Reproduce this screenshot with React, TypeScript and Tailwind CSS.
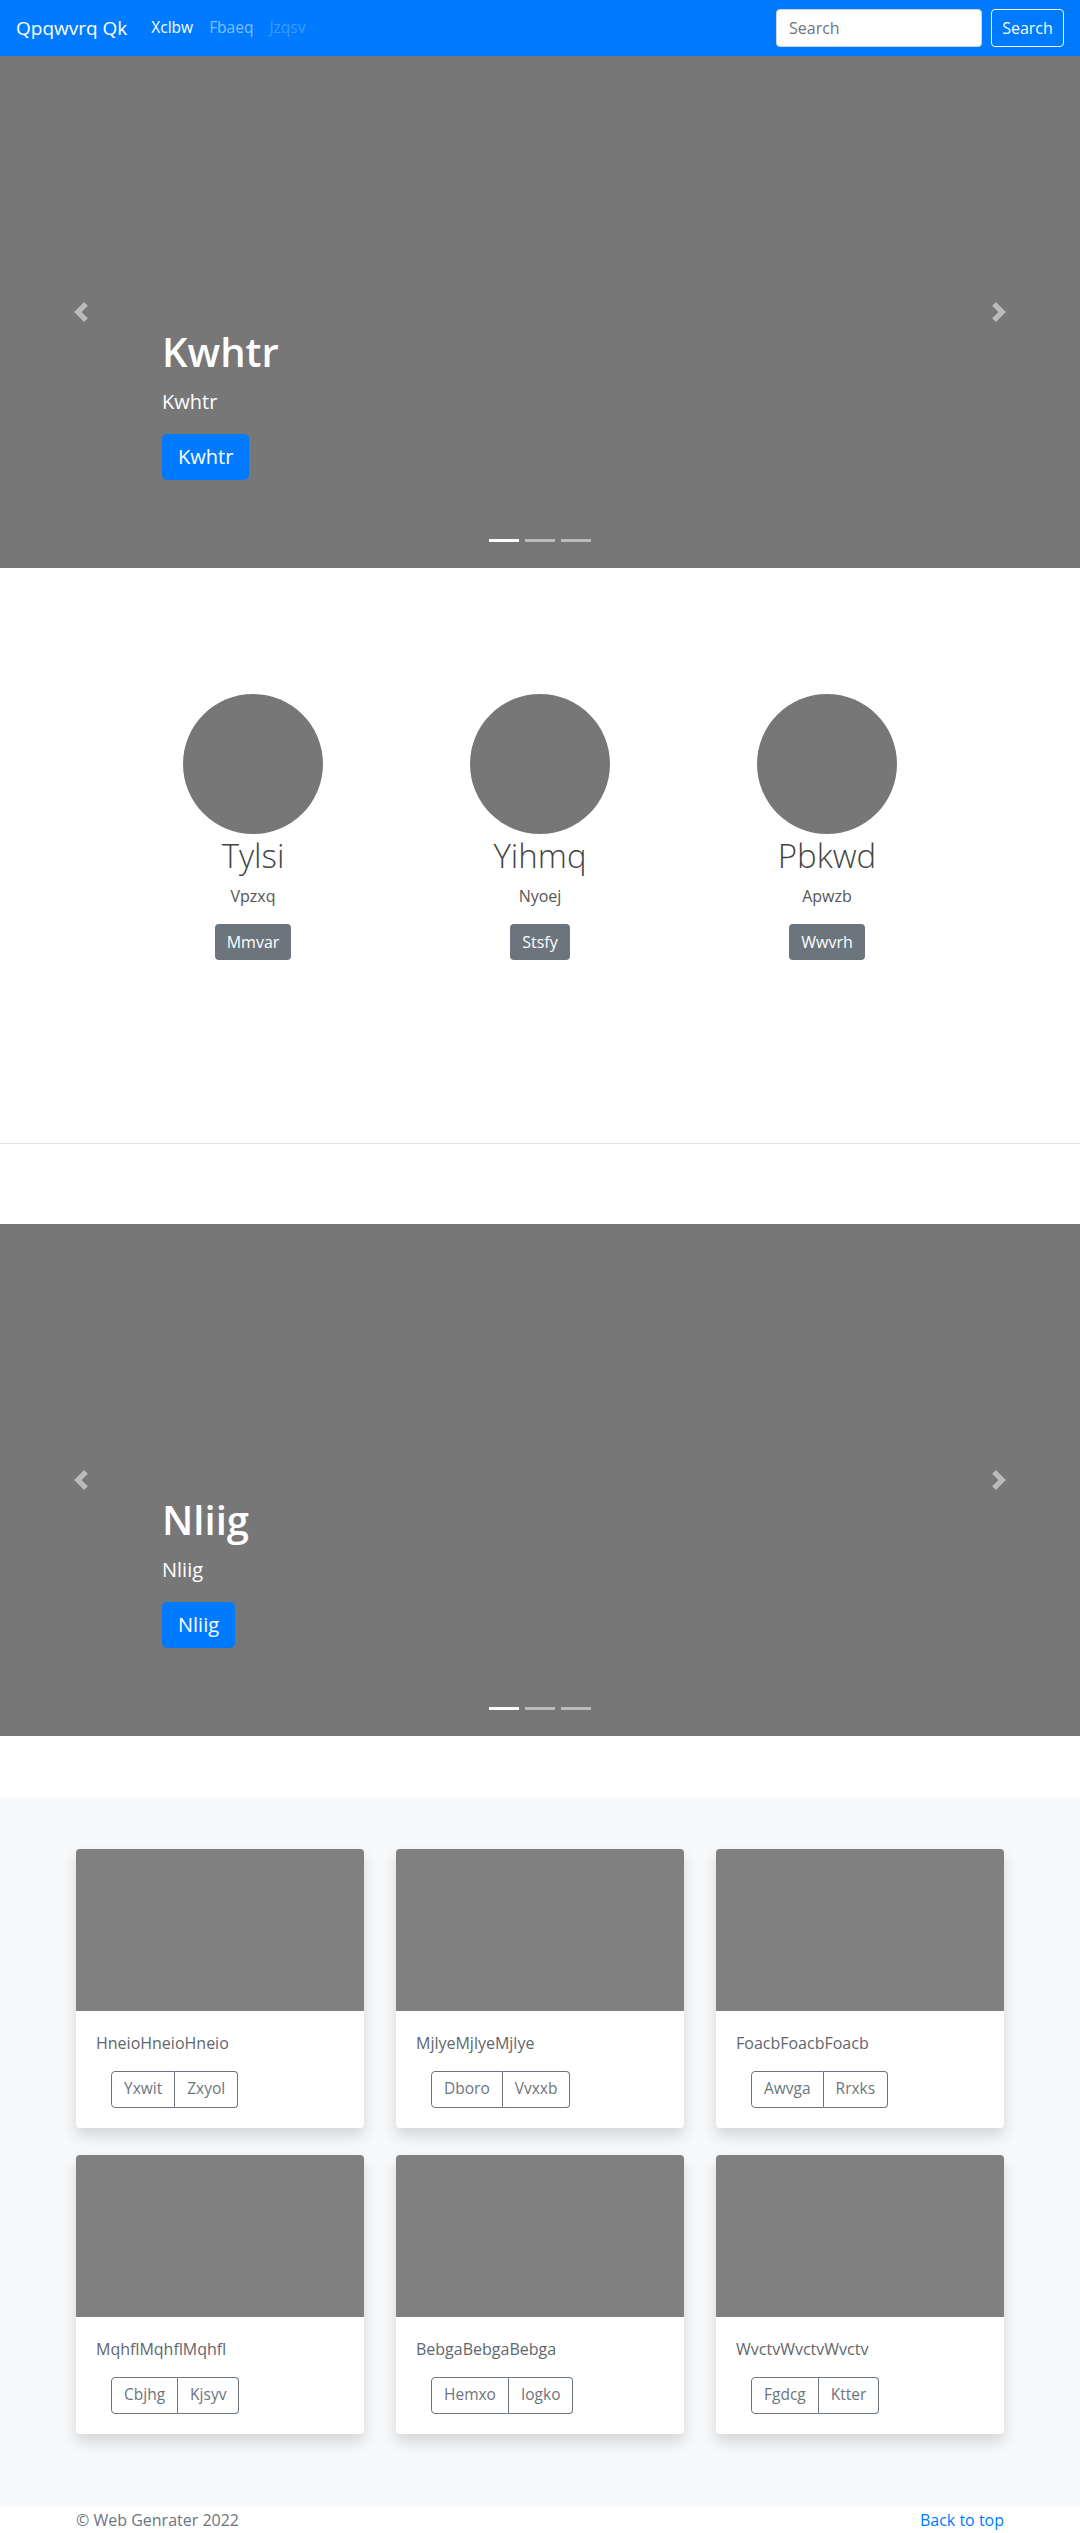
import React from 'react';

const font = { fontFamily: '"Open Sans", "Noto Sans", Arial, sans-serif' };

const ChevronLeft = () => (
  <svg width="20" height="20" viewBox="0 0 8 8" fill="#fff">
    <path d="M5.25 0l-4 4 4 4 1.5-1.5L4.25 4l2.5-2.5L5.25 0z" />
  </svg>
);

const ChevronRight = () => (
  <svg width="20" height="20" viewBox="0 0 8 8" fill="#fff">
    <path d="M2.75 0l-1.5 1.5L3.75 4l-2.5 2.5L2.75 8l4-4-4-4z" />
  </svg>
);

const Carousel = ({ title }: { title: string }) => (
  <div className="relative h-[512px] w-full bg-[#777777]">
    {/* controls */}
    <div className="absolute left-0 top-0 bottom-0 w-[15%] flex items-center justify-center opacity-50">
      <ChevronLeft />
    </div>
    <div className="absolute right-0 top-0 bottom-0 w-[15%] flex items-center justify-center opacity-50">
      <ChevronRight />
    </div>

    {/* caption */}
    <div className="absolute left-[15%] right-[15%] bottom-[88px] text-white">
      <h1 className="text-[40px] leading-[1.2] font-semibold mb-[11px]">{title}</h1>
      <p className="text-[20px] leading-[1.5] mb-[17px]">{title}</p>
      <button className="bg-[#007bff] text-white text-[20px] leading-[1.5] px-4 py-2 rounded-[5px]">{title}</button>
    </div>

    {/* indicators */}
    <div className="absolute left-0 right-0 bottom-[26px] flex justify-center gap-[6px]">
      <span className="block w-[30px] h-[3px] bg-white"></span>
      <span className="block w-[30px] h-[3px] bg-white/50"></span>
      <span className="block w-[30px] h-[3px] bg-white/50"></span>
    </div>
  </div>
);

const people = [
  { name: 'Tylsi', sub: 'Vpzxq', btn: 'Mmvar' },
  { name: 'Yihmq', sub: 'Nyoej', btn: 'Stsfy' },
  { name: 'Pbkwd', sub: 'Apwzb', btn: 'Wwvrh' },
];

const cards = [
  { text: 'HneioHneioHneio', a: 'Yxwit', b: 'Zxyol' },
  { text: 'MjlyeMjlyeMjlye', a: 'Dboro', b: 'Vvxxb' },
  { text: 'FoacbFoacbFoacb', a: 'Awvga', b: 'Rrxks' },
  { text: 'MqhflMqhflMqhfl', a: 'Cbjhg', b: 'Kjsyv' },
  { text: 'BebgaBebgaBebga', a: 'Hemxo', b: 'Iogko' },
  { text: 'WvctvWvctvWvctv', a: 'Fgdcg', b: 'Ktter' },
];

export default function App() {
  return (
    <div className="w-[1080px] bg-white text-[#212529]" style={font}>
      {/* Navbar */}
      <nav className="h-14 bg-[#007bff] flex items-center px-4">
        <span className="text-white text-[19px] mr-4">Qpqwvrq Qk</span>
        <div className="flex items-center text-[15.5px]">
          <a className="px-2 text-white">Xclbw</a>
          <a className="px-2 text-white/50">Fbaeq</a>
          <a className="px-2 text-white/25">Jzqsv</a>
        </div>
        <div className="ml-auto flex items-center gap-[9px]">
          <input
            placeholder="Search"
            className="w-[206px] h-[38px] bg-white rounded-[4px] border border-[#ced4da] px-3 text-[16px] placeholder:text-[#6c757d] outline-none"
          />
          <button className="h-[38px] w-[73px] border border-[#f8f9fa] rounded-[4px] text-[#f8f9fa] text-[16px]">Search</button>
        </div>
      </nav>

      <Carousel title="Kwhtr" />

      {/* Marketing */}
      <section className="pt-[126px] pb-[183px]">
        <div className="w-[861px] mx-auto grid grid-cols-3">
          {people.map((p) => (
            <div key={p.name} className="flex flex-col items-center text-center">
              <div className="w-[140px] h-[140px] rounded-full bg-[#777777]"></div>
              <h2 className="text-[33px] leading-[1.2] font-light text-[#444444] mt-[2px] mb-2">{p.name}</h2>
              <p className="text-[16px] leading-6 text-[#555555] mb-4">{p.sub}</p>
              <button className="bg-[#6c757d] text-white text-[16px] leading-6 px-3 py-1.5 rounded-[4px]">{p.btn}</button>
            </div>
          ))}
        </div>
      </section>

      <hr className="border-0 border-t border-[#e5e5e5]" />

      <div className="pt-[80px] pb-[61px]">
        <Carousel title="Nliig" />
      </div>

      {/* Album */}
      <section className="bg-[#f8f9fa] pt-[52px] pb-[73px]">
        <div className="w-[928px] mx-auto grid grid-cols-3 gap-x-8 gap-y-[27px]">
          {cards.map((c) => (
            <div key={c.text} className="bg-white rounded-[4px] overflow-hidden shadow-[0_8px_16px_rgba(0,0,0,0.15)]">
              <div className="h-[162px] bg-[#808080]"></div>
              <div className="p-5">
                <p className="text-[16px] leading-6 text-[#5f666d] mb-4">{c.text}</p>
                <div className="ml-[15px] inline-flex">
                  <button className="h-[37px] px-3 text-[15.5px] text-[#6c757d] border border-[#6c757d] rounded-l-[4px]">{c.a}</button>
                  <button className="h-[37px] px-3 text-[15.5px] text-[#6c757d] border border-[#6c757d] border-l-0 rounded-r-[4px]">{c.b}</button>
                </div>
              </div>
            </div>
          ))}
        </div>
      </section>

      {/* Footer */}
      <footer className="pt-px">
        <div className="w-[928px] mx-auto flex justify-between text-[16px] leading-6">
          <p className="text-[#6c757d]">© Web Genrater 2022</p>
          <a className="text-[#007bff]">Back to top</a>
        </div>
      </footer>
    </div>
  );
}
